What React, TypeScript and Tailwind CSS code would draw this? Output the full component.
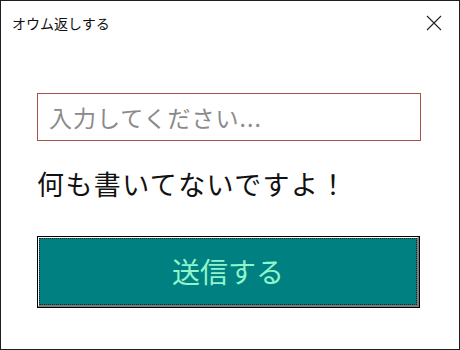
import { useState } from 'react';

const font = { fontFamily: '"Noto Sans CJK JP", "Noto Sans", sans-serif' };

export default function App() {
  const [text, setText] = useState('');

  return (
    <div
      className="flex h-[350px] w-[460px] flex-col border border-[#1e1e1e] bg-white text-black"
      style={font}
    >
      <div className="flex h-[44px] items-center justify-between pl-[11px] pr-[17px]">
        <span className="text-[14px] leading-none text-[#111]">オウム返しする</span>
        <svg width="16" height="16" viewBox="0 0 16 16" className="text-[#222]">
          <path d="M1 1L15 15M15 1L1 15" stroke="currentColor" strokeWidth="1.1" fill="none" />
        </svg>
      </div>

      <div className="flex flex-col pl-[36px]">
        <input
          value={text}
          onChange={(e) => setText(e.target.value)}
          placeholder="入力してください..."
          className="mt-[48px] h-[48px] w-[384px] border border-[#a8504a] px-[11px] text-[23px] tracking-[1px] text-[#333] outline-none placeholder:text-[#8a8a8a]"
          style={font}
        />
        <p className="mt-[28px] h-[30px] text-[27px] leading-[30px] tracking-[1.4px] text-[#111]">何も書いてないですよ！</p>
        <button
          type="button"
          className="mt-[37px] h-[72px] w-[383px] border border-black bg-white"
          style={font}
        >
          <div className="h-full w-full border-t border-l border-t-white border-l-white border-b-2 border-r-2 border-b-[#7a7a7a] border-r-[#7a7a7a]">
            <div className="flex h-full w-full items-center justify-center border border-dotted border-[#222] bg-[#008080] pb-[2px] text-[28px] text-[#8ff5cc]">
              送信する
            </div>
          </div>
        </button>
      </div>
    </div>
  );
}
